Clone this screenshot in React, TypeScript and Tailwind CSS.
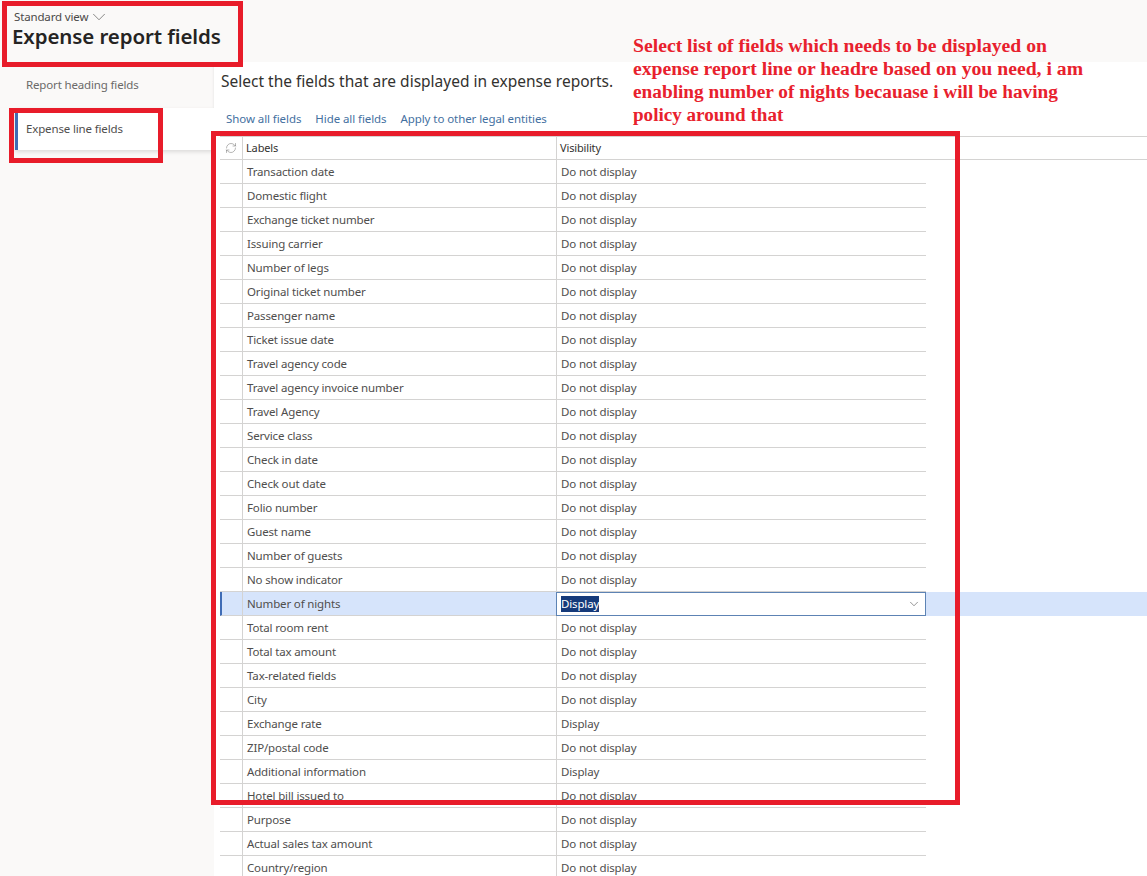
import { ChevronDown, RefreshCw } from "lucide-react";

const rows = [
  "Transaction date",
  "Domestic flight",
  "Exchange ticket number",
  "Issuing carrier",
  "Number of legs",
  "Original ticket number",
  "Passenger name",
  "Ticket issue date",
  "Travel agency code",
  "Travel agency invoice number",
  "Travel Agency",
  "Service class",
  "Check in date",
  "Check out date",
  "Folio number",
  "Guest name",
  "Number of guests",
  "No show indicator",
  "Number of nights",
  "Total room rent",
  "Total tax amount",
  "Tax-related fields",
  "City",
  "Exchange rate",
  "ZIP/postal code",
  "Additional information",
  "Hotel bill issued to",
  "Purpose",
  "Actual sales tax amount",
  "Country/region",
];

const shown = ["Exchange rate", "Additional information"];

const App = () => {
  return (
    <div className="relative h-[876px] w-full overflow-hidden bg-[#faf9f8] font-['Noto_Sans',sans-serif] text-[11.5px] tracking-[-0.15px] text-[#4f4e4d]">
      <header className="h-[62px] pl-[12px] pt-[8px]">
        <div className="flex h-[18px] items-center pl-[2px] text-[11.5px] leading-[18px] text-[#4a4948]">
          <span>Standard view</span>
          <ChevronDown size={22} strokeWidth={0.7} className="shrink-0" />
        </div>
        <h1 className="text-[20.5px] font-semibold leading-[20px] tracking-[-0.1px] text-[#252423]">
          Expense report fields
        </h1>
      </header>

      <div className="flex h-[814px]">
        <aside className="w-[214px] shrink-0">
          <div className="flex h-[46px] items-center pl-[26px] text-[#6b6a69] shadow-[inset_-2px_0_2px_-1px_#eeedec]">
            Report heading fields
          </div>
          <div className="ml-[15px] flex h-[42px] items-center border-l-[3px] border-[#3f6cb5] bg-white pl-[8px] shadow-[0_2px_4px_rgba(0,0,0,0.12)]">
            Expense line fields
          </div>
        </aside>

        <main className="flex-1 bg-white">
          <p className="flex h-[40px] items-center pl-[7px] text-[15.5px] tracking-normal text-[#33322f]">
            Select the fields that are displayed in expense reports.
          </p>
          <nav className="flex h-[34px] items-center gap-[14px] pl-[12px] tracking-[-0.08px] text-[#44709f]">
            <span>Show all fields</span>
            <span>Hide all fields</span>
            <span>Apply to other legal entities</span>
          </nav>

          <div className="ml-[6px] flex h-[24px] border-y border-[#d4d3d2] text-[#33322f]">
            <div className="flex w-[22px] shrink-0 items-center justify-center text-[#6f6e6d]">
              <RefreshCw size={12} strokeWidth={1} />
            </div>
            <div className="flex w-[314px] shrink-0 items-center border-l border-[#d4d3d2] pl-[3px] text-[11px]">
              Labels
            </div>
            <div className="flex flex-1 items-center border-l border-[#d4d3d2] pl-[3px] text-[11px]">
              Visibility
            </div>
          </div>

          {rows.map((label) => {
            const selected = label === "Number of nights";
            return (
              <div
                key={label}
                className={`ml-[6px] flex h-[24px] ${selected ? "bg-[#d6e4fb]" : ""}`}
              >
                <div
                  className={`w-[22px] shrink-0 border-b border-[#d4d3d2] ${
                    selected ? "border-l-2 border-l-[#3f6cb5]" : ""
                  }`}
                />
                <div className="flex w-[314px] shrink-0 items-center border-b border-l border-[#d4d3d2] pl-[4px]">
                  {label}
                </div>
                {selected ? (
                  <div className="flex h-[24px] w-[370px] shrink-0 items-center justify-between border border-[#5d83b4] bg-white pl-[4px] pr-[4px]">
                    <span className="bg-[#153a7a] leading-[16px] text-white">Display</span>
                    <ChevronDown size={14} strokeWidth={0.9} className="text-[#333]" />
                  </div>
                ) : (
                  <div className="flex w-[370px] shrink-0 items-center border-b border-l border-[#d4d3d2] pl-[4px]">
                    {shown.includes(label) ? "Display" : "Do not display"}
                  </div>
                )}
              </div>
            );
          })}
        </main>
      </div>

      {/* annotation drawn over the screenshot */}
      <p className="absolute left-[633px] top-[34px] w-[500px] font-['Liberation_Serif',serif] text-[19.7px] font-bold leading-[23px] tracking-normal text-[#e8212d]">
        Select list of fields which needs to be displayed on
        <br />
        expense report line or headre based on you need, i am
        <br />
        <span className="text-[19.3px]">enabling number of nights becauase i will be having</span>
        <br />
        <span className="text-[19.1px]">policy around that</span>
      </p>
      <div className="absolute left-[2px] top-[1px] h-[66px] w-[241px] border-[5px] border-[#e81c2a]" />
      <div className="absolute left-[9px] top-[108px] h-[55px] w-[154px] border-[5px] border-[#e81c2a]" />
      <div className="absolute left-[211px] top-[131px] h-[674px] w-[749px] border-[5px] border-[#e81c2a]" />
    </div>
  );
};

export default App;
